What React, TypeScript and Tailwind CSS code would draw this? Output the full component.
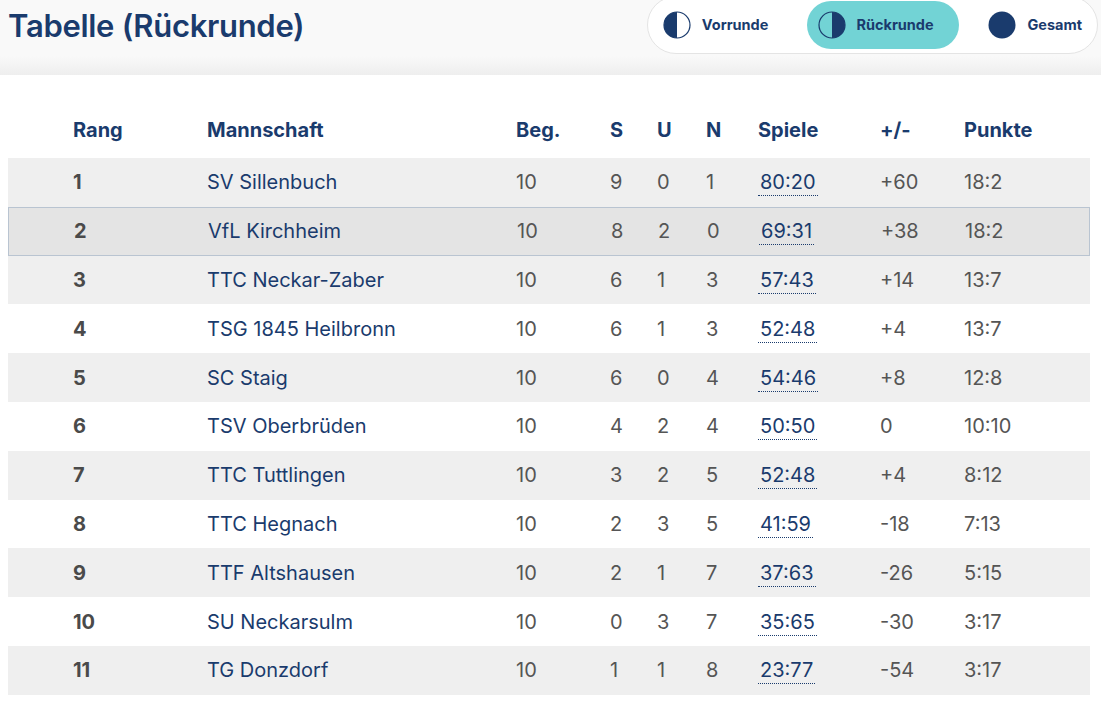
const rows = [
  { rang: 1, team: "SV Sillenbuch", beg: 10, s: 9, u: 0, n: 1, spiele: "80:20", diff: "+60", punkte: "18:2" },
  { rang: 2, team: "VfL Kirchheim", beg: 10, s: 8, u: 2, n: 0, spiele: "69:31", diff: "+38", punkte: "18:2" },
  { rang: 3, team: "TTC Neckar-Zaber", beg: 10, s: 6, u: 1, n: 3, spiele: "57:43", diff: "+14", punkte: "13:7" },
  { rang: 4, team: "TSG 1845 Heilbronn", beg: 10, s: 6, u: 1, n: 3, spiele: "52:48", diff: "+4", punkte: "13:7" },
  { rang: 5, team: "SC Staig", beg: 10, s: 6, u: 0, n: 4, spiele: "54:46", diff: "+8", punkte: "12:8" },
  { rang: 6, team: "TSV Oberbrüden", beg: 10, s: 4, u: 2, n: 4, spiele: "50:50", diff: "0", punkte: "10:10" },
  { rang: 7, team: "TTC Tuttlingen", beg: 10, s: 3, u: 2, n: 5, spiele: "52:48", diff: "+4", punkte: "8:12" },
  { rang: 8, team: "TTC Hegnach", beg: 10, s: 2, u: 3, n: 5, spiele: "41:59", diff: "-18", punkte: "7:13" },
  { rang: 9, team: "TTF Altshausen", beg: 10, s: 2, u: 1, n: 7, spiele: "37:63", diff: "-26", punkte: "5:15" },
  { rang: 10, team: "SU Neckarsulm", beg: 10, s: 0, u: 3, n: 7, spiele: "35:65", diff: "-30", punkte: "3:17" },
  { rang: 11, team: "TG Donzdorf", beg: 10, s: 1, u: 1, n: 8, spiele: "23:77", diff: "-54", punkte: "3:17" }
];

const cols = "grid grid-cols-[134px_309px_94px_47px_49px_52px_122px_84px_1fr] items-center pl-[65px]";

function HalfIcon({ side }: { side: "left" | "right" | "full" }) {
  return (
    <svg width="28" height="28" viewBox="0 0 28 28">
      {side === "full" ? (
        <circle cx="14" cy="14" r="13.5" fill="#1a3b6d" />
      ) : (
        <>
          <circle cx="14" cy="14" r="13" fill="none" stroke="#1a3b6d" strokeWidth="1.2" />
          <path d={side === "left" ? "M14 1 A13 13 0 0 0 14 27 Z" : "M14 1 A13 13 0 0 1 14 27 Z"} fill="#1a3b6d" />
        </>
      )}
    </svg>
  );
}

export default function App() {
  return (
    <div className="min-h-[703px] bg-white font-['Inter',sans-serif]">
      <div className="flex h-[75px] items-start justify-between bg-[linear-gradient(to_bottom,#f9f9f9_75%,#eeeeee)]">
        <h1 className="pl-2 pt-[3px] text-[31px] font-semibold tracking-[-0.3px] text-[#1a3b6d]">Tabelle (Rückrunde)</h1>
        <div className="-mt-[4px] mr-[3px] flex h-[58px] items-center rounded-full border border-[#e4e4e4] bg-white pl-[15px] pr-[15px] text-[14.5px] font-bold text-[#1a3b6d]">
          <button className="flex h-[48px] items-center gap-[11px] rounded-full pr-[39px]">
            <HalfIcon side="left" />
            Vorrunde
          </button>
          <button className="flex h-[48px] w-[152px] items-center gap-[10px] rounded-full bg-[#72d3d5] pl-[11px]">
            <HalfIcon side="right" />
            Rückrunde
          </button>
          <button className="flex h-[48px] items-center gap-[11px] pl-[29px]">
            <HalfIcon side="full" />
            Gesamt
          </button>
        </div>
      </div>

      <div className="ml-2 mr-[11px] mt-[35px]">
        <div className={`${cols} mb-2 h-[40px] text-[20px] font-bold text-[#1a3b6d]`}>
          <div>Rang</div>
          <div>Mannschaft</div>
          <div>Beg.</div>
          <div>S</div>
          <div>U</div>
          <div>N</div>
          <div>Spiele</div>
          <div>+/-</div>
          <div>Punkte</div>
        </div>
        {rows.map((row, i) => (
          <div
            key={row.rang}
            className={`${cols} h-[48.8px] text-[20px] text-[#555555] ${
              row.rang === 2 ? "border border-[#b9c4d1] bg-[#e4e4e4]" : i % 2 === 0 ? "bg-[#efefef]" : "bg-white"
            }`}
          >
            <div className="font-bold text-[#4a4a4a]">{row.rang}</div>
            <div className="text-[#1a3b6d]">{row.team}</div>
            <div>{row.beg}</div>
            <div>{row.s}</div>
            <div>{row.u}</div>
            <div>{row.n}</div>
            <div>
              <span className="border-b border-dotted border-[#1a3b6d] px-[2px] pb-[1px] text-[#1a3b6d]">{row.spiele}</span>
            </div>
            <div>{row.diff}</div>
            <div>{row.punkte}</div>
          </div>
        ))}
      </div>
    </div>
  );
}
